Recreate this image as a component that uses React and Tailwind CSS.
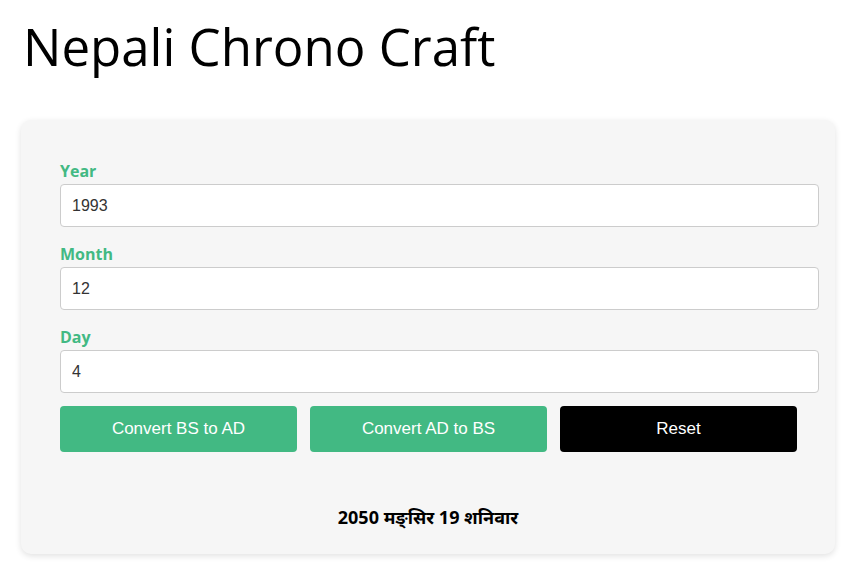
import React, { useState } from 'react';

function Field({ label, value, onChange }) {
  return (
    <div className="flex flex-col">
      <label className="text-[16px] leading-[20px] font-bold text-[#42b983] font-['Open_Sans',sans-serif]">{label}</label>
      <input
        className="mt-[3px] h-[43px] w-[759px] rounded-[4px] border border-[#cccccc] bg-white px-[11px] text-[16px] text-[#333333] font-['Liberation_Sans',Arial,sans-serif] outline-none"
        value={value}
        onChange={e => onChange(e.target.value)}
      />
    </div>
  );
}

export default function App() {
  const [year, setYear] = useState('1993');
  const [month, setMonth] = useState('12');
  const [day, setDay] = useState('4');

  function reset() {
    setYear('');
    setMonth('');
    setDay('');
  }

  return (
    <div className="min-h-[583px] bg-white pt-[14px]">
      <h1 className="ml-[23px] text-[51px] leading-[64px] text-black font-['Open_Sans',sans-serif]">Nepali Chrono Craft</h1>
      <div className="ml-[21px] mt-[42px] w-[814px] rounded-[10px] bg-[#f6f6f6] pl-[39px] pt-[41px] pb-[23px] shadow-[0_2px_6px_rgba(0,0,0,0.12)]">
        <div className="flex flex-col gap-[17px]">
          <Field label="Year" value={year} onChange={setYear} />
          <Field label="Month" value={month} onChange={setMonth} />
          <Field label="Day" value={day} onChange={setDay} />
        </div>
        <div className="mt-[13px] flex gap-[13px] font-['Liberation_Sans',Arial,sans-serif] text-[17px] text-white">
          <button className="h-[46px] w-[237px] rounded-[4px] bg-[#42b983]">Convert BS to AD</button>
          <button className="h-[46px] w-[237px] rounded-[4px] bg-[#42b983]">Convert AD to BS</button>
          <button className="h-[46px] w-[237px] rounded-[4px] bg-black" onClick={reset}>Reset</button>
        </div>
        <p className="mt-[52px] -ml-[39px] text-center text-[18px] font-bold text-black font-['Noto_Sans',sans-serif]">2050 मङ्सिर 19 शनिवार</p>
      </div>
    </div>
  );
}
